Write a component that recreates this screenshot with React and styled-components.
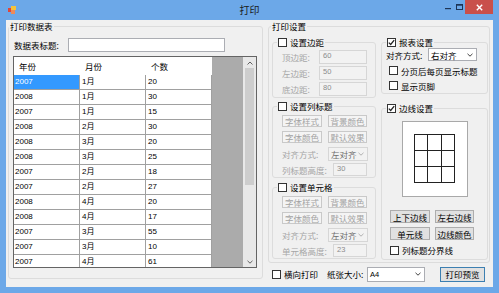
import React from "react";
import styled, { createGlobalStyle } from "styled-components";

const GlobalStyle = createGlobalStyle`
  html, body { margin: 0; padding: 0; background: #ffffff; }
  body {
    font-family: "Noto Sans CJK SC", "Noto Sans", sans-serif;
    font-size: 8.5px;
    color: #000;
  }
  * { box-sizing: border-box; }
`;

const rows = [
  ["2007", "1月", "20"],
  ["2008", "1月", "30"],
  ["2007", "1月", "15"],
  ["2008", "2月", "30"],
  ["2008", "3月", "20"],
  ["2008", "3月", "25"],
  ["2007", "2月", "18"],
  ["2007", "2月", "27"],
  ["2008", "4月", "20"],
  ["2008", "4月", "17"],
  ["2007", "3月", "55"],
  ["2007", "3月", "10"],
  ["2007", "4月", "61"],
];

const Window = styled.div`
  width: 499px;
  height: 293px;
  background: #6ca8e8;
  display: flex;
  flex-direction: column;
  overflow: hidden;
`;

const TitleBar = styled.div`
  height: 20px;
  flex: none;
  display: grid;
  grid-template-columns: 1fr auto 1fr;
  align-items: center;
`;

const AppIcon = styled.svg`
  display: block;
  margin-left: 8px;
`;

const Title = styled.div`
  font-size: 10px;
  line-height: 20px;
  color: #1a1a1a;
`;

const Controls = styled.div`
  justify-self: end;
  align-self: start;
  display: flex;
  margin-right: 6px;
`;

const CtrlButton = styled.div`
  width: ${(p) => p.$w}px;
  height: 14px;
  display: flex;
  align-items: center;
  justify-content: center;
  background: ${(p) => (p.$close ? "#c9504b" : "transparent")};
`;

const Client = styled.div`
  flex: 1;
  margin: 0 6px 6px;
  background: #f0f0f0;
  display: flex;
  align-items: flex-start;
  gap: 5px;
  padding: 0 3px 0 2px;
`;

const Group = styled.div`
  border: 1px solid #dcdcdc;
  border-radius: 3px;
  margin-top: ${(p) => p.$mt || 0}px;
  width: ${(p) => (p.$w ? `${p.$w}px` : "auto")};
  height: ${(p) => (p.$h ? `${p.$h}px` : "auto")};
  display: flex;
  flex-direction: column;
  flex: none;
`;

const GroupTitle = styled.div`
  margin: -7px 0 0 ${(p) => p.$indent || 0}px;
  align-self: flex-start;
  height: 12px;
  line-height: 12px;
  padding: 0 1px;
  background: #f0f0f0;
  display: flex;
  align-items: center;
  gap: 3px;
  white-space: nowrap;
`;

const GroupBody = styled.div`
  display: flex;
  flex-direction: column;
  padding: ${(p) => p.$pad || "0"};
  gap: ${(p) => p.$gap || 0}px;
`;

const Line = styled.div`
  display: flex;
  align-items: center;
  height: ${(p) => p.$h || 14}px;
  gap: ${(p) => p.$gap || 0}px;
  margin-top: ${(p) => p.$mt || 0}px;
  padding-left: ${(p) => p.$pl || 0}px;
  flex: none;
`;

const Label = styled.span`
  width: ${(p) => (p.$w ? `${p.$w}px` : "auto")};
  margin-left: ${(p) => p.$ml || 0}px;
  flex: none;
  white-space: nowrap;
  color: ${(p) => (p.$disabled ? "#a6a6a6" : "#000")};
`;

const TextBox = styled.div`
  width: ${(p) => p.$w}px;
  height: ${(p) => p.$h || 14}px;
  border: 1px solid ${(p) => (p.$disabled ? "#d6d6d6" : "#abadb3")};
  background: ${(p) => (p.$disabled ? "#f2f2f2" : "#fff")};
  color: #8c8c8c;
  font-family: "Liberation Sans", sans-serif;
  font-size: 7.5px;
  line-height: 10px;
  padding-left: 3px;
  flex: none;
`;

const Btn = styled.div`
  width: ${(p) => p.$w}px;
  height: ${(p) => p.$h || 12}px;
  margin-left: ${(p) => p.$ml || 0}px;
  border: 1px solid
    ${(p) => (p.$disabled ? "#c9c9c9" : p.$primary ? "#3c7fb1" : "#adadad")};
  background: ${(p) => (p.$disabled ? "#f4f4f4" : "#e1e1e1")};
  color: ${(p) => (p.$disabled ? "#a3a3a3" : "#000")};
  display: flex;
  align-items: center;
  justify-content: center;
  white-space: nowrap;
  flex: none;
`;

const SelectBox = styled.div`
  width: ${(p) => p.$w}px;
  height: ${(p) => p.$h || 14}px;
  border: 1px solid ${(p) => (p.$disabled ? "#d6d6d6" : "#abadb3")};
  background: ${(p) => (p.$disabled ? "#f2f2f2" : "#fff")};
  color: ${(p) => (p.$disabled ? "#6d6d6d" : "#000")};
  display: flex;
  align-items: center;
  justify-content: space-between;
  padding: 0 3px 0 2px;
  flex: none;
  font-family: ${(p) => (p.$latin ? '"Liberation Sans", sans-serif' : "inherit")};
  font-size: ${(p) => (p.$latin ? "7.5px" : "8.5px")};
`;

const Box = styled.span`
  width: 9px;
  height: 9px;
  border: 1px solid #333;
  background: #fff;
  display: inline-flex;
  align-items: center;
  justify-content: center;
  flex: none;
`;

const CheckLine = styled.div`
  display: flex;
  align-items: center;
  gap: 3px;
  height: ${(p) => p.$h || 12}px;
  padding-left: ${(p) => p.$pl || 0}px;
  margin-top: ${(p) => p.$mt || 0}px;
  white-space: nowrap;
  flex: none;
`;

const GridBox = styled.div`
  margin-top: 4px;
  width: 244px;
  height: 212px;
  border: 1px solid #646464;
  display: flex;
  background: #ababab;
  overflow: hidden;
`;

const GridBody = styled.div`
  flex: 1;
  overflow: hidden;
`;

const HeaderRow = styled.div`
  width: 198px;
  height: 18px;
  background: #fff;
  display: flex;
`;

const HeaderCell = styled.div`
  width: 66px;
  padding-left: 5px;
  line-height: 18px;
  font-size: 8.5px;
`;

const DataRow = styled.div`
  width: 198px;
  height: 15px;
  display: flex;
  border-bottom: 1px solid #a0a0a0;
  flex: none;
`;

const Cell = styled.div`
  width: 66px;
  height: 14px;
  border-right: 1px solid #a0a0a0;
  padding-left: ${(p) => (p.$col === 0 ? 1 : 2)}px;
  font-family: "Liberation Sans", "Noto Sans CJK SC", sans-serif;
  font-size: 8px;
  line-height: 14px;
  background: ${(p) => (p.$selected ? "#3399ff" : "#fff")};
  color: ${(p) => (p.$selected ? "#fff" : "#000")};
`;

const Scroll = styled.div`
  width: 13px;
  background: #e8e8e8;
  display: flex;
  flex-direction: column;
  align-items: center;
`;

const ScrollArrow = styled.div`
  height: 11px;
  display: flex;
  align-items: center;
  justify-content: center;
  flex: none;
`;

const Thumb = styled.div`
  width: 9px;
  height: 117px;
  background: #cdcdcd;
`;

const Track = styled.div`
  flex: 1;
`;

const RightCol = styled.div`
  width: 222px;
  display: flex;
  flex-direction: column;
`;

const Columns = styled.div`
  display: flex;
  gap: 5px;
  padding: 0 1px 0 3px;
  align-items: flex-start;
`;

const SubCol = styled.div`
  width: ${(p) => p.$w}px;
  display: flex;
  flex-direction: column;
`;

const Preview = styled.div`
  align-self: center;
  margin-top: 7px;
  width: 66px;
  height: 76px;
  background: #fff;
  border: 1px solid #a9a9a9;
  display: flex;
  align-items: center;
  justify-content: center;
`;

const PreviewGrid = styled.div`
  width: 41px;
  height: 49px;
  display: grid;
  grid-template-columns: repeat(3, 1fr);
  grid-template-rows: repeat(3, 1fr);
  border-left: 1px solid #222;
  border-top: 1px solid #222;
  margin-top: -1px;
`;

const PreviewCell = styled.div`
  border-right: 1px solid #222;
  border-bottom: 1px solid #222;
`;

const BottomRow = styled.div`
  margin-top: 2px;
  height: 18px;
  display: flex;
  align-items: center;
  padding-left: 4px;
`;

function Check({ checked }) {
  return (
    <Box>
      {checked && (
        <svg width="7" height="7" viewBox="0 0 7 7">
          <path d="M0.8 3.6 L2.7 5.5 L6.2 1.2" fill="none" stroke="#222" strokeWidth="1.3" />
        </svg>
      )}
    </Box>
  );
}

function Chevron({ color = "#444", up }) {
  return (
    <svg width="6" height="4" viewBox="0 0 6 4">
      <path
        d={up ? "M0.5 3.5 L3 1 L5.5 3.5" : "M0.5 0.8 L3 3.2 L5.5 0.8"}
        fill="none"
        stroke={color}
        strokeWidth="1"
      />
    </svg>
  );
}

function Select({ value, w, h, disabled, latin }) {
  return (
    <SelectBox $w={w} $h={h} $disabled={disabled} $latin={latin}>
      <span>{value}</span>
      <Chevron color={disabled ? "#b0b0b0" : "#444"} />
    </SelectBox>
  );
}

function StyleButtons() {
  return (
    <>
      <Line $h={12} $gap={6} $pl={9}>
        <Btn $w={40} $disabled>字体样式</Btn>
        <Btn $w={39} $disabled>背景颜色</Btn>
      </Line>
      <Line $h={12} $gap={6} $pl={9} $mt={4}>
        <Btn $w={40} $disabled>字体颜色</Btn>
        <Btn $w={39} $disabled>默认效果</Btn>
      </Line>
      <Line $h={14} $pl={9} $mt={4}>
        <Label $w={46} $disabled>对齐方式:</Label>
        <Select value="左对齐" w={40} disabled />
      </Line>
    </>
  );
}

export default function App() {
  return (
    <>
      <GlobalStyle />
      <Window>
        <TitleBar>
          <AppIcon width="8" height="8" viewBox="0 0 8 8">
            <rect x="0" y="2" width="4" height="4" fill="#e0463a" />
            <rect x="3" y="0" width="5" height="4" fill="#f5c33b" />
            <rect x="3" y="4" width="4" height="4" fill="#ee8a5a" />
          </AppIcon>
          <Title>打印</Title>
          <Controls>
            <CtrlButton $w={10}>
              <svg width="6" height="6" viewBox="0 0 6 6">
                <rect x="0" y="4" width="6" height="1.2" fill="#1d3557" />
              </svg>
            </CtrlButton>
            <CtrlButton $w={12}>
              <svg width="7" height="6" viewBox="0 0 7 6">
                <rect x="0.5" y="0.5" width="6" height="5" fill="none" stroke="#1d3557" strokeWidth="1" />
                <rect x="0.5" y="0.5" width="6" height="1.2" fill="#1d3557" />
              </svg>
            </CtrlButton>
            <CtrlButton $w={28} $close>
              <svg width="7" height="7" viewBox="0 0 7 7">
                <path d="M0.8 0.8 L6.2 6.2 M6.2 0.8 L0.8 6.2" stroke="#fff" strokeWidth="1.4" />
              </svg>
            </CtrlButton>
          </Controls>
        </TitleBar>

        <Client>
          <Group $mt={6} $w={255} $h={253}>
            <GroupTitle>打印数据表</GroupTitle>
            <GroupBody $pad="6px 5px 0 4px">
              <Line $h={14} $pl={1}>
                <Label $w={54}>数据表标题:</Label>
                <TextBox $w={157} />
              </Line>
              <GridBox>
                <GridBody>
                  <HeaderRow>
                    <HeaderCell>年份</HeaderCell>
                    <HeaderCell>月份</HeaderCell>
                    <HeaderCell>个数</HeaderCell>
                  </HeaderRow>
                  {rows.map((r, i) => (
                    <DataRow key={i}>
                      {r.map((v, j) => (
                        <Cell key={j} $col={j} $selected={i === 0 && j === 0}>
                          {v}
                        </Cell>
                      ))}
                    </DataRow>
                  ))}
                </GridBody>
                <Scroll>
                  <ScrollArrow>
                    <Chevron up color="#606060" />
                  </ScrollArrow>
                  <Thumb />
                  <Track />
                  <ScrollArrow>
                    <Chevron color="#606060" />
                  </ScrollArrow>
                </Scroll>
              </GridBox>
            </GroupBody>
          </Group>

          <RightCol>
            <Group $mt={6} $w={222} $h={237}>
              <GroupTitle $indent={2}>打印设置</GroupTitle>
              <Columns>
                <SubCol $w={104}>
                  <Group $mt={10}>
                    <GroupTitle $indent={4}>
                      <Check />
                      设置边距
                    </GroupTitle>
                    <GroupBody $pad="2px 0 1px 9px" $gap={2}>
                      <Line>
                        <Label $w={37} $disabled>顶边距:</Label>
                        <TextBox $w={48} $disabled>60</TextBox>
                      </Line>
                      <Line>
                        <Label $w={37} $disabled>左边距:</Label>
                        <TextBox $w={48} $disabled>50</TextBox>
                      </Line>
                      <Line>
                        <Label $w={37} $disabled>底边距:</Label>
                        <TextBox $w={48} $disabled>80</TextBox>
                      </Line>
                    </GroupBody>
                  </Group>

                  <Group $mt={8}>
                    <GroupTitle $indent={4}>
                      <Check />
                      设置列标题
                    </GroupTitle>
                    <GroupBody $pad="3px 0 1px 0">
                      <StyleButtons />
                      <Line $h={13} $pl={9} $mt={2}>
                        <Label $w={51} $disabled>列标题高度:</Label>
                        <TextBox $w={34} $h={13} $disabled>30</TextBox>
                      </Line>
                    </GroupBody>
                  </Group>

                  <Group $mt={9}>
                    <GroupTitle $indent={4}>
                      <Check />
                      设置单元格
                    </GroupTitle>
                    <GroupBody $pad="3px 0 1px 0">
                      <StyleButtons />
                      <Line $h={13} $pl={9} $mt={2}>
                        <Label $w={51} $disabled>单元格高度:</Label>
                        <TextBox $w={34} $h={13} $disabled>23</TextBox>
                      </Line>
                    </GroupBody>
                  </Group>
                </SubCol>

                <SubCol $w={107}>
                  <Group $mt={10}>
                    <GroupTitle $indent={4}>
                      <Check checked />
                      报表设置
                    </GroupTitle>
                    <GroupBody $pad="0 0 0 0">
                      <Line $h={13} $pl={4}>
                        <Label $w={42}>对齐方式:</Label>
                        <Select value="右对齐" w={49} h={13} />
                      </Line>
                      <CheckLine $h={15} $pl={7} $mt={2}>
                        <Check />
                        分页后每页显示标题
                      </CheckLine>
                      <CheckLine $h={15} $pl={7}>
                        <Check />
                        显示页脚
                      </CheckLine>
                    </GroupBody>
                  </Group>

                  <Group $mt={14}>
                    <GroupTitle $indent={4}>
                      <Check checked />
                      边线设置
                    </GroupTitle>
                    <GroupBody $pad="0 0 3px 0">
                      <Preview>
                        <PreviewGrid>
                          {Array.from({ length: 9 }).map((_, i) => (
                            <PreviewCell key={i} />
                          ))}
                        </PreviewGrid>
                      </Preview>
                      <Line $h={13} $gap={5} $pl={8} $mt={13}>
                        <Btn $w={40} $h={13}>上下边线</Btn>
                        <Btn $w={39} $h={13}>左右边线</Btn>
                      </Line>
                      <Line $h={13} $gap={5} $pl={8} $mt={4}>
                        <Btn $w={40} $h={13}>单元线</Btn>
                        <Btn $w={39} $h={13}>边线颜色</Btn>
                      </Line>
                      <CheckLine $h={12} $pl={8} $mt={4}>
                        <Check />
                        列标题分界线
                      </CheckLine>
                    </GroupBody>
                  </Group>
                </SubCol>
              </Columns>
            </Group>

            <BottomRow>
              <CheckLine $h={18}>
                <Check />
                横向打印
              </CheckLine>
              <Label $w={40} $ml={9}>纸张大小:</Label>
              <Select value="A4" w={58} h={15} latin />
              <Btn $w={45} $h={15} $ml={15} $primary>打印预览</Btn>
            </BottomRow>
          </RightCol>
        </Client>
      </Window>
    </>
  );
}
